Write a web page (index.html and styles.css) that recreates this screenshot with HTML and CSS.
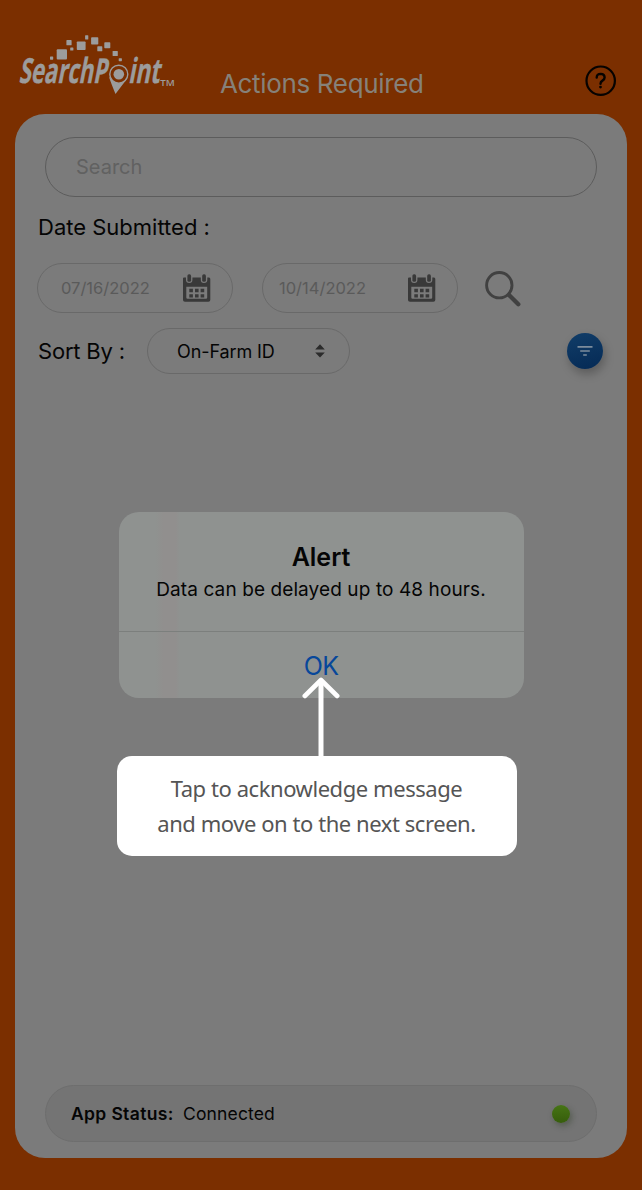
FILE: index.html
```html
<!DOCTYPE html>
<html lang="en">
<head>
<meta charset="utf-8">
<title>SearchPoint - Actions Required</title>
<link rel="stylesheet" href="styles.css">
</head>
<body>
<div class="app">
  <header class="header">
    <svg class="logo" width="162" height="66" viewBox="16 32 162 66" role="img" aria-label="SearchPoint">
      <g fill="#9c9c9c">
        <rect x="50" y="56.5" width="3.2" height="3.2" rx=".6"/>
        <rect x="56.7" y="49.3" width="10.3" height="10.2" rx="1"/>
        <rect x="66.4" y="40.1" width="5.2" height="5.2" rx=".6"/>
        <rect x="70.2" y="47.4" width="3.2" height="3.2" rx=".6"/>
        <rect x="76.8" y="41.5" width="8.8" height="8.6" rx=".8"/>
        <rect x="85.1" y="35.2" width="3.2" height="4.4" rx=".6"/>
        <rect x="91.1" y="37.3" width="7.2" height="7.2" rx=".8"/>
        <rect x="97.3" y="46.3" width="5" height="5" rx=".6"/>
        <rect x="104.3" y="42.3" width="6" height="6" rx=".7"/>
        <rect x="112.6" y="51" width="5.2" height="5" rx=".6"/>
        <rect x="118.7" y="58.2" width="3.2" height="3" rx=".6"/>
        <text class="logo-word" transform="translate(18.5 83.3) skewX(-11)" textLength="88" lengthAdjust="spacingAndGlyphs">SearchP</text>
        <text class="logo-word" transform="translate(128 83.3) skewX(-11)" textLength="31.5" lengthAdjust="spacingAndGlyphs">int</text>
        <text class="logo-tm" x="160.3" y="85.7" textLength="14.5" lengthAdjust="spacingAndGlyphs">TM</text>
        <path d="M109 77Q111 83 115.5 94Q123 84 127 79Q118 85 109 77Z"/>
      </g>
      <circle cx="118.8" cy="74.2" r="9" fill="#7b2f00" stroke="#9c9c9c" stroke-width="1.4"/>
      <circle cx="118.8" cy="74.2" r="5.3" fill="#9c9c9c"/>
    </svg>
    <h1 class="title">Actions Required</h1>
    <svg class="help" width="32" height="32" viewBox="0 0 32 32" fill="none" stroke="#070300" stroke-linecap="round">
      <circle cx="15.7" cy="15.7" r="14.2" stroke-width="2.2"/>
      <path d="M11.7 12.5Q11.8 8.9 15.7 8.9Q19.6 9 19.6 12.5Q19.6 14.4 17.5 15.6Q15.5 16.8 15.5 18.7" stroke-width="2.4"/>
      <circle cx="15.5" cy="22.1" r="1.4" fill="#070300" stroke="none"/>
    </svg>
  </header>

  <main class="panel">
    <div class="search"><span class="search-hint">Search</span></div>
    <div class="label label-date">Date Submitted :</div>
    <div class="dates">
      <div class="date"><span class="date-from">07/16/2022</span>
        <svg class="calendar" width="28" height="28" viewBox="0 0 28 28"><path fill="#393939" fill-rule="evenodd" d="M0 4.5Q0 3.5 1 3.5H3V6Q3 9 6.3 9Q9.4 9 9.4 6V3.5H17.8V6Q17.8 9 21 9Q24.3 9 24.3 6V3.5H26Q27.3 3.5 27.3 5V26Q27.3 27.8 25.5 27.8H2Q0 27.8 0 26ZM3.3 12.8V23.5Q3.3 24.7 4.5 24.7H23Q24.2 24.7 24.2 23.5V12.8Z"/><g fill="#393939"><rect x="4.4" y=".3" width="3.7" height="7.5" rx="1.6"/><rect x="19.2" y=".3" width="3.7" height="7.5" rx="1.6"/><path d="M6.3 14.8h3.6v3.4H6.3zM12 14.8h3.6v3.4H12zM17.6 14.8h3.6v3.4h-3.6zM6.3 20.2h3.6v3.2H6.3zM12 20.2h3.6v3.2H12zM17.6 20.2h3.6v3.2h-3.6z"/></g></svg>
      </div>
      <div class="date date-end"><span class="date-to">10/14/2022</span>
        <svg class="calendar" width="28" height="28" viewBox="0 0 28 28"><path fill="#393939" fill-rule="evenodd" d="M0 4.5Q0 3.5 1 3.5H3V6Q3 9 6.3 9Q9.4 9 9.4 6V3.5H17.8V6Q17.8 9 21 9Q24.3 9 24.3 6V3.5H26Q27.3 3.5 27.3 5V26Q27.3 27.8 25.5 27.8H2Q0 27.8 0 26ZM3.3 12.8V23.5Q3.3 24.7 4.5 24.7H23Q24.2 24.7 24.2 23.5V12.8Z"/><g fill="#393939"><rect x="4.4" y=".3" width="3.7" height="7.5" rx="1.6"/><rect x="19.2" y=".3" width="3.7" height="7.5" rx="1.6"/><path d="M6.3 14.8h3.6v3.4H6.3zM12 14.8h3.6v3.4H12zM17.6 14.8h3.6v3.4h-3.6zM6.3 20.2h3.6v3.2H6.3zM12 20.2h3.6v3.2H12zM17.6 20.2h3.6v3.2h-3.6z"/></g></svg>
      </div>
      <svg class="magnifier" width="37" height="37" viewBox="0 0 37 37" fill="none" stroke="#414141" stroke-linecap="round"><circle cx="14.3" cy="14.2" r="12.7" stroke-width="2.9"/><path d="M24 24L33.3 33.2" stroke-width="4.3"/></svg>
    </div>
    <div class="sort">
      <span class="label label-sort">Sort By :</span>
      <div class="select"><span class="select-value">On-Farm ID</span>
        <svg width="10" height="14" viewBox="0 0 10 14" fill="#2b2b2b"><path d="M5 .3L9.8 5.4H.2ZM5 13.5L9.8 8.4H.2Z"/></svg>
      </div>
      <div class="filter"><svg width="16" height="12" viewBox="0 0 16 12" stroke="#7c8c9c" stroke-width="1.7"><path d="M.5 1.8H15.5M3.2 6H12.8M6.2 10H9.8"/></svg></div>
    </div>
    <div class="status"><strong class="status-name">App Status:</strong><span class="status-value">Connected</span><i class="status-dot"></i></div>
  </main>

  <section class="overlay">
    <div class="alert">
      <div class="alert-body"><h2 class="alert-title">Alert</h2><p class="alert-text">Data can be delayed up to 48 hours.</p></div>
      <div class="alert-action">OK</div>
    </div>
    <svg class="arrow" width="40" height="82" viewBox="0 0 40 82" fill="none" stroke="#fff" stroke-linecap="round" stroke-linejoin="round"><path d="M20 3V82" stroke-width="5" stroke-linecap="butt"/><path d="M3.8 19L20 3L36.2 19" stroke-width="4.6"/></svg>
    <div class="callout"><p class="callout-line callout-first">Tap to acknowledge message</p><p class="callout-line callout-second">and move on to the next screen.</p></div>
  </section>
</div>
</body>
</html>
```

FILE: styles.css
```css
* { box-sizing: border-box; }
body { margin: 0; }
h1, h2, p { margin: 0; font-weight: 400; }
svg { display: block; flex: none; }

.app {
  position: relative;
  width: 642px;
  height: 1190px;
  overflow: hidden;
  padding: 0 15px;
  background: #7b2f00;
  color: #050505;
  font-family: Inter, "Liberation Sans", sans-serif;
  white-space: nowrap;
}

.header { height: 114px; display: flex; align-items: flex-start; }
.logo { margin: 32px 0 0 1px; }
.logo-word {
  font: 700 34.5px "Open Sans", sans-serif;
  stroke: #9c9c9c;
  stroke-width: .4px;
}
.logo-tm { font: 600 9px "Open Sans", sans-serif; }
.title {
  width: 203px;
  margin: 68px 0 0 42px;
  color: #868179;
  font-size: 26px;
  line-height: 32px;
  letter-spacing: -.34px;
}
.help { margin: 65px 0 0 162px; }

.panel {
  height: 1044px;
  padding: 23px 24px 16px 22px;
  display: flex;
  flex-direction: column;
  background: #7b7b7b;
  border-radius: 30px;
}
.search {
  height: 60px;
  margin: 0 6px 0 8px;
  padding: 0 30px;
  display: flex;
  align-items: center;
  border: 1px solid #5c5c5c;
  border-radius: 30px;
  color: #616161;
  font-size: 20px;
}
.label { font-size: 22px; line-height: 28px; }
.label-date { margin: 16px 0 0 1px; }

.dates { height: 50px; margin-top: 22px; display: flex; }
.date {
  width: 196px;
  padding: 0 21px 0 23px;
  display: flex;
  align-items: center;
  justify-content: space-between;
  border: 1px solid #696969;
  border-radius: 25px;
  color: #5a5a5a;
  font-size: 16.5px;
}
.date-end { margin-left: 29px; padding-left: 16px; }
.magnifier { margin: 8px 0 0 27px; }

.sort { height: 46px; margin-top: 15px; display: flex; align-items: center; }
.label-sort { width: 110px; padding-left: 1px; letter-spacing: -.2px; }
.select {
  width: 203px;
  height: 46px;
  padding: 0 24px 0 29px;
  display: flex;
  align-items: center;
  justify-content: space-between;
  border: 1px solid #696969;
  border-radius: 23px;
  font-size: 18px;
  letter-spacing: -.1px;
}
.filter {
  width: 36px;
  height: 36px;
  margin-left: auto;
  display: flex;
  align-items: center;
  justify-content: center;
  border-radius: 50%;
  background: linear-gradient(165deg, #113d68, #052a55);
  box-shadow: 2px 5px 10px rgba(0, 0, 0, .25);
}

.status {
  height: 57px;
  margin: auto 6px 0 8px;
  padding: 0 26px 0 25px;
  display: flex;
  align-items: center;
  border: 1px solid #6e6e6e;
  border-radius: 28.5px;
  background: #747474;
  font-size: 17.5px;
}
.status-name { width: 112px; font-weight: 600; letter-spacing: .35px; }
.status-value { letter-spacing: .15px; }
.status-dot {
  width: 18px;
  height: 18px;
  margin: 1px 0 0 auto;
  border-radius: 50%;
  background: linear-gradient(#467415, #365d0b);
  box-shadow: 2px 3px 6px rgba(25, 45, 15, .35);
}

.overlay {
  position: absolute;
  inset: 0;
  padding-top: 512px;
}
.alert {
  width: 405px;
  height: 186px;
  margin-left: 118.5px;
  border-radius: 20px;
  background: linear-gradient(90deg, #8f9290 9%, #918f8e 11%, #918f8e 14%, #8f9290 15%);
  text-align: center;
}
.alert-body { height: 120px; padding-top: 29px; border-bottom: 1px solid #7c7f7d; }
.alert-title { font-size: 25px; line-height: 32px; font-weight: 600; }
.alert-text { font-size: 19px; line-height: 33px; letter-spacing: .1px; }
.alert-action { color: #07479a; font-size: 25px; line-height: 68px; letter-spacing: -.8px; }
.arrow { position: relative; margin: -21px 0 0 301px; }
.callout {
  width: 400px;
  height: 100px;
  margin: -3px 0 0 116.5px;
  padding-top: 15px;
  border-radius: 15px;
  background: #fff;
  color: #555;
  font: 22px/35px "Noto Sans", sans-serif;
  letter-spacing: -.44px;
  text-align: center;
}
```
